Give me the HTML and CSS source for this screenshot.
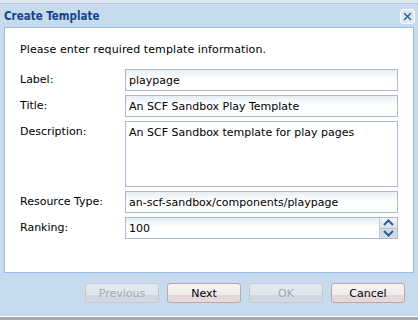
FILE: index.html
```html
<!DOCTYPE html>
<html lang="en">
<head>
    <meta charset="UTF-8">
    <title>Create Template</title>
    <link rel="stylesheet" href="styles.css">
</head>
<body>
    <div class="topstrip"></div>
    <div class="dialog">
        <div class="header">
            <span class="title">Create Template</span>
            <span class="close">
                <svg width="15" height="15" viewBox="0 0 15 15">
                    <rect x="0.5" y="0.5" width="14" height="14" rx="3" fill="#dbe8f5" stroke="#ffffff"/>
                    <path d="M4 4 L11 11 M11 4 L4 11" stroke="#2c5a9a" stroke-width="1.4"/>
                </svg>
            </span>
        </div>
        <div class="body">
            <p class="intro">Please enter required template information.</p>
            <div class="form">
                <div class="row">
                    <label>Label:</label>
                    <div class="field"><input type="text" value="playpage"></div>
                </div>
                <div class="row">
                    <label>Title:</label>
                    <div class="field"><input type="text" value="An SCF Sandbox Play Template"></div>
                </div>
                <div class="row">
                    <label>Description:</label>
                    <div class="field"><textarea>An SCF Sandbox template for play pages</textarea></div>
                </div>
                <div class="row">
                    <label>Resource Type:</label>
                    <div class="field"><input type="text" value="an-scf-sandbox/components/playpage"></div>
                </div>
                <div class="row">
                    <label>Ranking:</label>
                    <div class="field spin">
                        <input type="text" value="100">
                        <div class="spinner">
                            <div class="up"><svg width="11" height="7" viewBox="0 0 11 7"><path d="M1 6 L5.5 1.5 L10 6" fill="none" stroke="#2d5b9b" stroke-width="2"/></svg></div>
                            <div class="down"><svg width="11" height="7" viewBox="0 0 11 7"><path d="M1 1 L5.5 5.5 L10 1" fill="none" stroke="#2d5b9b" stroke-width="2"/></svg></div>
                        </div>
                    </div>
                </div>
            </div>
        </div>
        <div class="buttons">
            <button class="btn" disabled>Previous</button>
            <button class="btn">Next</button>
            <button class="btn" disabled>OK</button>
            <button class="btn">Cancel</button>
        </div>
    </div>
</body>
</html>
```

FILE: styles.css
```css
html, body { margin: 0; padding: 0; }
body { width: 418px; height: 320px; overflow: hidden; background: #a4a8ac; font-family: "DejaVu Sans", sans-serif; font-size: 11px; color: #000; }
.topstrip { height: 3px; background: #dfe6ee; border-bottom: 1px solid #aec4da; }
.dialog { background: #c6dbee; border-bottom: 1px solid #ffffff; height: 312px; display: flex; flex-direction: column; }
.header { height: 23px; display: flex; align-items: center; justify-content: space-between; padding: 0 4px; }
.title { color: #15428b; font-family: "DejaVu Sans Condensed", "DejaVu Sans", sans-serif; font-weight: bold; font-size: 11.5px; padding-top: 1px; }
.close { display: flex; margin-top: 2px; margin-right: -1px; }
.body { margin: 0 4px; height: 244px; background: #fff; border: 1px solid #99bbe8; padding: 0 15px; }
.intro { margin: 15px 0 12px; line-height: 14px; letter-spacing: 0.1px; }
.form { display: flex; flex-direction: column; gap: 4px; }
.row { display: flex; align-items: flex-start; }
.row label { width: 105px; flex: none; line-height: 22px; }
.field { flex: 1; display: flex; position: relative; }
.field input, .field textarea { flex: 1; box-sizing: border-box; margin: 0; border: 1px solid #a9b8d3; font: inherit; color: #000; background: linear-gradient(#e6eef3, #ffffff 9px); outline: none; }
.field input { height: 22px; padding: 0 3px; }
.field textarea { height: 66px; padding: 4px 3px; line-height: 14px; resize: none; background: #fff; }
.spinner { position: absolute; right: 1px; top: 1px; bottom: 1px; width: 17px; display: flex; flex-direction: column; background: #d5dbe3; border-left: 1px solid #c3cad6; }
.spinner .up, .spinner .down { flex: 1; display: flex; align-items: center; justify-content: center; }
.spinner .up { background: linear-gradient(#f2f5f8, #dce2ea); border-bottom: 1px solid #b9c3d1; }
.buttons { display: flex; justify-content: flex-end; gap: 8px; padding: 10px 13px 0 0; }
.btn { width: 74px; height: 20px; box-sizing: border-box; margin: 0; padding: 0; border: 1px solid #bca6aa; border-radius: 3px; font: inherit; color: #000; background: linear-gradient(#f5f3f3 0, #efeaea 11px, #e4d5d7 11px, #e7dadb 100%); }
.btn:disabled { color: #a3a9b1; border-color: #c4cad4; background: linear-gradient(#e3e9f0 0, #e0e6ee 11px, #d3d7dd 11px, #d5d9df 100%); }
```
